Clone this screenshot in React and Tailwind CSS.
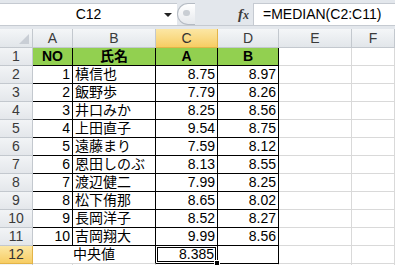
import React from "react";

const rows = [
  [1, "槙信也", "8.75", "8.97"],
  [2, "飯野歩", "7.79", "8.26"],
  [3, "井口みか", "8.25", "8.56"],
  [4, "上田直子", "9.54", "8.75"],
  [5, "遠藤まり", "7.59", "8.12"],
  [6, "恩田しのぶ", "8.13", "8.55"],
  [7, "渡辺健二", "7.99", "8.25"],
  [8, "松下侑那", "8.65", "8.02"],
  [9, "長岡洋子", "8.52", "8.27"],
  [10, "吉岡翔大", "9.99", "8.56"],
];

const font = { fontFamily: '"Liberation Sans", "Noto Sans CJK JP", sans-serif' };

function ColHead({ label, active }) {
  return (
    <div
      className={
        "h-[19px] border-r border-b text-center text-[14px] leading-[18px] " +
        (active
          ? "bg-gradient-to-b from-[#fce7a4] to-[#f7cd62] border-[#e3b448] text-[#333]"
          : "bg-gradient-to-b from-[#f4f6f8] to-[#e2e6ea] border-[#c3c8ce] text-[#3a3a3a]")
      }
    >
      {label}
    </div>
  );
}

function RowHead({ n, active }) {
  return (
    <div
      className={
        "h-[18px] border-r border-b text-center text-[14px] leading-[17px] " +
        (active
          ? "bg-gradient-to-b from-[#fce7a4] to-[#f7cd62] border-[#e3b448] text-[#333]"
          : "bg-gradient-to-b from-[#f2f4f6] to-[#e4e7eb] border-[#c3c8ce] text-[#3a3a3a]")
      }
    >
      {n}
    </div>
  );
}

function Cell({ children, className = "" }) {
  return (
    <div className={"h-[18px] border-r border-b px-[2px] text-[14px] leading-[17px] whitespace-nowrap overflow-hidden " + className}>
      {children}
    </div>
  );
}

export default function App() {
  return (
    <div className="w-[395px] h-[265px] overflow-hidden bg-white text-black" style={font}>
      {/* formula bar */}
      <div className="h-[29px] bg-[#e3e7ec] pt-[3px]">
        <div className="flex h-[23px] border-b border-[#c5cad1]">
          <div className="relative w-[177px] bg-white border-t border-[#c5cad1] text-center text-[14px] leading-[21px]">
            C12
            <div className="absolute right-[5px] top-[9px] w-0 h-0 border-l-[4px] border-r-[4px] border-t-[4px] border-l-transparent border-r-transparent border-t-[#222]" />
          </div>
          <div className="flex items-center justify-center w-[18px] h-[22px] rounded-l-full border border-r-0 border-[#b5bbc3] bg-gradient-to-b from-white to-[#e6e9ed]">
            <div className="w-[7px] h-[6px] rounded-full bg-[#c9ced4] -mt-[3px]" />
          </div>
          <div className="w-[58px] flex items-center justify-end pr-[4px]">
            <span className="italic font-bold text-[15px] text-[#3c3c3c]" style={{ fontFamily: '"Liberation Serif", serif' }}>
              f<span className="text-[12px]">x</span>
            </span>
          </div>
          <div className="flex-1 bg-white border-t border-l border-[#c5cad1] pl-[9px] text-[14px] leading-[21px] whitespace-nowrap">
            =MEDIAN(C2:C11)
          </div>
        </div>
      </div>

      {/* sheet */}
      <div className="grid grid-cols-[33px_40px_83px_62px_61px_73px_1fr]">
        <div className="h-[19px] border-r border-b border-[#c3c8ce] bg-gradient-to-b from-[#f4f6f8] to-[#e2e6ea] flex items-end justify-end pr-[3px] pb-[3px]">
          <svg width="10" height="10" viewBox="0 0 10 10">
            <path d="M10 0 L10 10 L0 10 Z" fill="#c9ced5" />
          </svg>
        </div>
        <ColHead label="A" />
        <ColHead label="B" />
        <ColHead label="C" active />
        <ColHead label="D" />
        <ColHead label="E" />
        <ColHead label="F" />

        <RowHead n={1} />
        <Cell className="bg-[#92d050] border-black text-center font-bold">NO</Cell>
        <Cell className="bg-[#92d050] border-black text-center font-bold">氏名</Cell>
        <Cell className="bg-[#92d050] border-black text-center font-bold">A</Cell>
        <Cell className="bg-[#92d050] border-black text-center font-bold">B</Cell>
        <Cell className="border-[#d9d9d9]" />
        <Cell className="border-[#d9d9d9]" />

        {rows.map((r, i) => (
          <React.Fragment key={r[0]}>
            <RowHead n={i + 2} />
            <Cell className="border-black text-right">{r[0]}</Cell>
            <Cell className="border-black">{r[1]}</Cell>
            <Cell className="border-black text-right">{r[2]}</Cell>
            <Cell className="border-black text-right">{r[3]}</Cell>
            <Cell className="border-[#d9d9d9]" />
            <Cell className="border-[#d9d9d9]" />
          </React.Fragment>
        ))}

        <RowHead n={12} active />
        <Cell className="col-span-2 border-r-black border-b-[#d9d9d9] text-center">中央値</Cell>
        <div className="relative h-[18px] border-r border-b border-black text-[14px] leading-[17px] text-right">
          <div className="absolute left-[1px] top-[1px] right-[1px] bottom-[1px] border border-black" />
          <span className="relative pr-[3px]">8.385</span>
          <div className="absolute -right-[3px] -bottom-[3px] w-[6px] h-[6px] bg-black border border-white z-10" />
        </div>
        <Cell className="border-black" />
        <Cell className="border-[#d9d9d9]" />
        <Cell className="border-[#d9d9d9]" />

        <RowHead n="" />
        <Cell className="border-[#d9d9d9]" />
        <Cell className="border-[#d9d9d9]" />
        <Cell className="border-[#d9d9d9]" />
        <Cell className="border-[#d9d9d9]" />
        <Cell className="border-[#d9d9d9]" />
        <Cell className="border-[#d9d9d9]" />
      </div>
    </div>
  );
}
